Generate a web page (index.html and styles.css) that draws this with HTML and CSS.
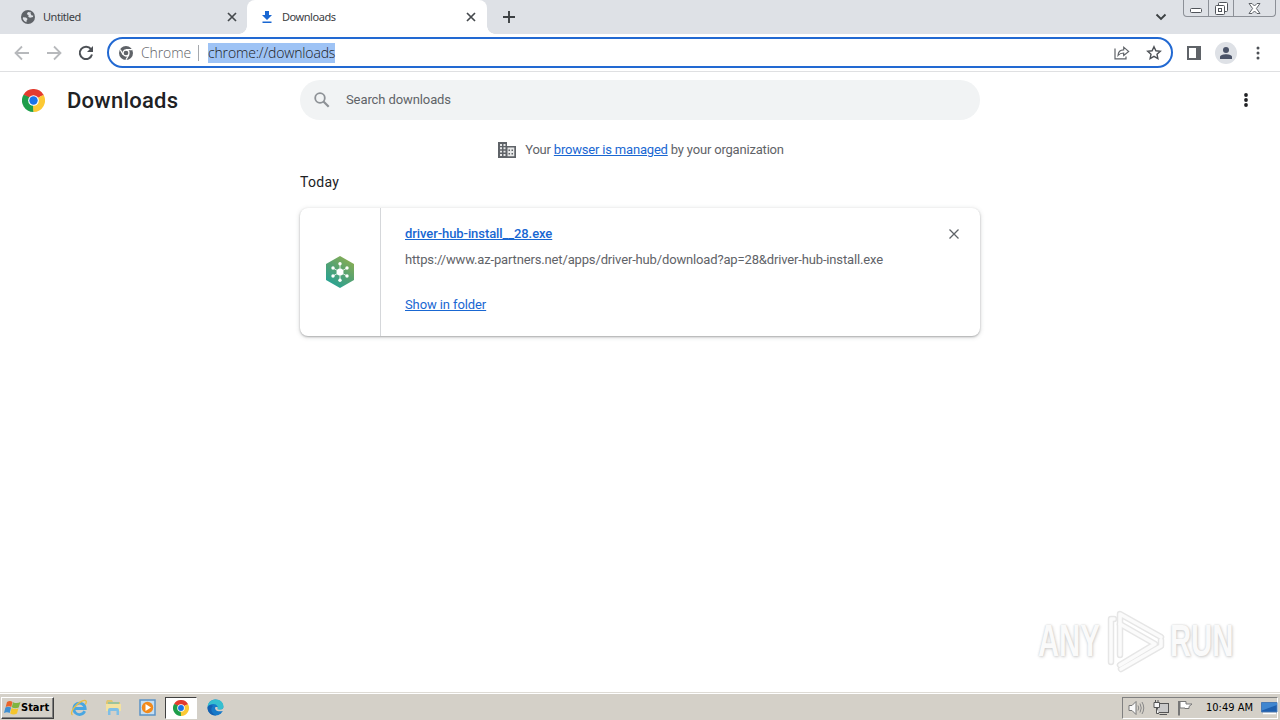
FILE: index.html
```html
<!DOCTYPE html>
<html lang="en">
<head>
    <meta charset="UTF-8">
    <meta name="viewport" content="width=device-width, initial-scale=1.0">
    <title>Downloads</title>
    <link rel="stylesheet" href="styles.css">
</head>
<body>
    <!-- Shared logo -->
    <svg class="defs" width="0" height="0">
        <symbol id="chrome" viewBox="0 0 24 24">
            <path d="M12 12 1.6 6A12 12 0 0 1 22.4 6Z" fill="#e33b2e"/>
            <path d="M12 12 22.4 6A12 12 0 0 1 12 24Z" fill="#fcc934"/>
            <path d="M12 12 12 24A12 12 0 0 1 1.6 6Z" fill="#1e9e4a"/>
            <path d="M12 6.5H22.7L22.4 6 12 5Z" fill="#e33b2e"/>
            <path d="M16.8 14.8 12 24 11.5 17Z" fill="#fcc934"/>
            <path d="M1.6 6 7.3 14.8 9 9Z" fill="#1e9e4a"/>
            <circle cx="12" cy="12" r="5.6" fill="#fff"/>
            <circle cx="12" cy="12" r="4.4" fill="#1a73e8"/>
        </symbol>
    </svg>

    <div class="tabstrip">
        <div class="tab">
            <svg class="tab-icon" width="14" height="14" viewBox="0 0 14 14"><circle cx="7" cy="7" r="7" fill="#5f6368"/><path d="M2 7.2 5 7.6 6.6 9 5.7 10.2 5.4 12.2 3.2 11 1.8 8.8ZM7 2 5.8 4 7.7 5.4 7.2 6.7 9 7.7 12 7.1 12.2 5.4 10.7 5.5 9.5 3.6 10.2 2.6Z" fill="#dee1e6"/></svg>
            <span class="tab-title">Untitled</span>
            <svg width="10" height="10" viewBox="0 0 10 10"><path d="M1 1 9 9M9 1 1 9" stroke="#45494d" stroke-width="1.7"/></svg>
        </div>
        <div class="tab active">
            <svg class="tab-icon" width="14" height="14" viewBox="0 0 14 14"><path d="M5 1H9V5H12L7 10 2 5H5ZM2.5 11.5H11.5V13H2.5Z" fill="#1967d2"/></svg>
            <span class="tab-title">Downloads</span>
            <svg width="10" height="10" viewBox="0 0 10 10"><path d="M1 1 9 9M9 1 1 9" stroke="#45494d" stroke-width="1.7"/></svg>
        </div>
        <svg class="new-tab" width="12" height="12" viewBox="0 0 12 12"><path d="M6 0V12M0 6H12" stroke="#3c4043" stroke-width="1.9"/></svg>
        <svg class="tab-search" width="12" height="8" viewBox="0 0 12 8"><path d="M1.5 1.5 6 6 10.5 1.5" fill="none" stroke="#3c4043" stroke-width="1.9"/></svg>
        <div class="window-buttons">
            <span class="wb min"><svg width="12" height="5" viewBox="0 0 12 5"><rect x=".5" y=".5" width="11" height="4" rx="1" fill="#fff" stroke="#50545a"/></svg></span>
            <span class="wb max"><svg width="13" height="13" viewBox="0 0 13 13" fill="#fff" stroke="#50545a"><rect x="3.5" y=".5" width="9" height="9" rx="1"/><rect x=".5" y="3.5" width="9" height="9" rx="1"/><rect x="3.5" y="6.5" width="3" height="3"/></svg></span>
            <span class="wb close"><svg width="13" height="11" viewBox="0 0 13 11"><path d="M1 .5H4L6.5 3 9 .5H12L8.4 5.5 12 10.5H9L6.5 8 4 10.5H1L4.6 5.5Z" fill="#fff" stroke="#5f6368"/></svg></span>
        </div>
    </div>

    <div class="toolbar">
        <div class="nav">
            <svg width="16" height="16" viewBox="0 0 16 16"><path d="M15 8H2M8 1.5 1.5 8 8 14.5" fill="none" stroke="#b7b9bc" stroke-width="1.8"/></svg>
            <svg width="16" height="16" viewBox="0 0 16 16"><path d="M1 8H14M8 1.5 14.5 8 8 14.5" fill="none" stroke="#b7b9bc" stroke-width="1.8"/></svg>
            <svg width="16" height="16" viewBox="0 0 16 16"><path d="M13 4.2A6.2 6.2 0 1 0 14 9.5" fill="none" stroke="#4d5156" stroke-width="2"/><path d="M15 1V7H9Z" fill="#4d5156"/></svg>
        </div>
        <div class="omnibox">
            <svg width="14" height="14" viewBox="0 0 14 14"><circle cx="7" cy="7" r="7" fill="#5f6368"/><circle cx="7" cy="7" r="3" fill="#5f6368" stroke="#fff" stroke-width="1.3"/><path d="M7 3.7H13.2M4.1 8.6 1.2 3.5M9.9 8.7 6.9 13.8" stroke="#fff" stroke-width="1.2"/></svg>
            <span class="scheme">Chrome</span>
            <span class="divider"></span>
            <span class="url">chrome://downloads</span>
            <svg class="share" width="16" height="14" viewBox="0 0 16 14"><path d="M1 2.5V12.8H12V10.500" fill="none" stroke="#5f6368" stroke-width="1.2"/><path d="M4 9.5C4.2 6 6.2 4 9.7 3.9V1.2L14.7 5.500 9.7 9.5V7C7.2 7 5.4 7.7 4 9.5Z" fill="none" stroke="#5f6368" stroke-width="1.1"/></svg>
            <svg width="16" height="16" viewBox="0 0 16 16"><path d="M8 1.7 9.9 5.8 14.3 6.3 11 9.3 11.9 13.7 8 11.4 4.1 13.7 5 9.3 1.7 6.3 6.1 5.8Z" fill="none" stroke="#4d5156" stroke-width="1.4"/></svg>
        </div>
        <div class="actions">
            <svg width="14" height="14" viewBox="0 0 14 14"><rect x="1" y="1" width="12" height="12" fill="none" stroke="#5f6368" stroke-width="2"/><path d="M9 1H14V13H9Z" fill="#5f6368"/></svg>
            <span class="avatar"><svg width="14" height="14" viewBox="0 0 14 14" fill="#4a5368"><circle cx="7" cy="4" r="3"/><path d="M1 13V11C1 9 4.5 8.2 7 8.2S13 9 13 11V13Z"/></svg></span>
            <svg width="4" height="14" viewBox="0 0 4 14" fill="#4d5156"><circle cx="2" cy="2" r="1.5"/><circle cx="2" cy="7" r="1.5"/><circle cx="2" cy="12" r="1.5"/></svg>
        </div>
    </div>

    <div class="page">
        <div class="header">
            <svg class="logo" width="23" height="23"><use href="#chrome"/></svg>
            <h1>Downloads</h1>
            <div class="search">
                <svg width="16" height="16" viewBox="0 0 16 16"><circle cx="6" cy="6" r="4.8" fill="none" stroke="#8d9196" stroke-width="1.8"/><path d="M9.5 9.5 14.7 14.7" stroke="#8d9196" stroke-width="2.2"/></svg>
                <span>Search downloads</span>
            </div>
            <svg class="more" width="4" height="14" viewBox="0 0 4 14" fill="#202124"><circle cx="2" cy="2" r="1.9"/><circle cx="2" cy="7" r="1.9"/><circle cx="2" cy="12" r="1.9"/></svg>
        </div>

        <div class="managed">
            <svg width="18" height="16" viewBox="0 0 18 16"><path d="M0 0H9V4H18V16H0Z" fill="#5f6368"/><path d="M2 2H4V4H2ZM5.5 2H7.5V4H5.5ZM2 5.3H4V7.2H2ZM5.5 5.3H7.5V7.2H5.5ZM2 8.7H4V10.6H2ZM5.5 8.7H7.5V10.6H5.5ZM2 12H4V14H2ZM5.5 12H7.5V14H5.5ZM9.5 5.6H16.3V14.3H9.5Z" fill="#fff" fill-opacity=".85"/><path d="M10.5 7.5H12V9H10.5ZM13.5 7.5H15V9H13.5ZM10.5 11H12V12.5H10.5ZM13.5 11H15V12.5H13.5Z" fill="#5f6368"/></svg>
            <span class="managed-text">Your <a href="#">browser is managed</a> by your organization</span>
        </div>

        <div class="content">
            <h2>Today</h2>
            <div class="card">
                <div class="file-icon">
                    <svg width="30" height="32" viewBox="0 0 30 32">
                        <defs><linearGradient id="hub" x1=".85" y1="0" x2=".2" y2="1"><stop offset="0" stop-color="#8faf4f"/><stop offset=".5" stop-color="#55a272"/><stop offset="1" stop-color="#22a398"/></linearGradient></defs>
                        <path d="M15 0 29 8V24L15 32 1 24V8Z" fill="url(#hub)"/>
                        <path d="M15 8V24M8 12 22 20M22 12 8 20" stroke="#fff" stroke-width=".8"/>
                        <g fill="#fff"><circle cx="15" cy="16" r="3.5"/><circle cx="15" cy="7.7" r="1.7"/><circle cx="15" cy="24.3" r="1.7"/><circle cx="8" cy="12" r="1.7"/><circle cx="22" cy="20" r="1.7"/><circle cx="22" cy="12" r="1.7"/><circle cx="8" cy="20" r="1.7"/></g>
                    </svg>
                </div>
                <div class="details">
                    <a class="file-name" href="#">driver-hub-install__28.exe</a>
                    <span class="source">https://www.az-partners.net/apps/driver-hub/download?ap=28&amp;driver-hub-install.exe</span>
                    <a class="show" href="#">Show in folder</a>
                </div>
                <svg class="remove" width="10" height="10" viewBox="0 0 10 10"><path d="M.5.5 9.5 9.5M9.5.5.5 9.5" stroke="#5f6368" stroke-width="1.3"/></svg>
            </div>
        </div>

        <div class="watermark">
            <span>ANY</span>
            <svg width="58" height="66" viewBox="0 0 58 66" fill="none" stroke-linejoin="round" stroke-linecap="round">
                <g stroke="#e6e6e6" stroke-width="6.5"><path d="M13 47V6L54 29"/><path d="M13 16 48 36 13 57"/><path d="M4 54V11H7M14 61 54 38V32"/></g>
                <g stroke="#fbfbfb" stroke-width="3.6"><path d="M13 47V6L54 29"/><path d="M13 16 48 36 13 57"/><path d="M4 54V11H7M14 61 54 38V32"/></g>
            </svg>
            <span>RUN</span>
        </div>
    </div>

    <div class="taskbar">
        <div class="start">
            <svg width="17" height="16" viewBox="0 0 17 16"><path d="M3 2Q6 0 8.5 2L7.3 7Q5 5.5 1.7 7Z" fill="#e9642b"/><path d="M9 2.2Q13 4 16.5 2L14.7 7.5Q11 9 7.8 7.2Z" fill="#7fb540"/><path d="M1.4 7.5Q4 6 7.1 7.5L5.7 13Q3 11.500 0 13Z" fill="#3f8fd2"/><path d="M7.6 8Q11 10 14.4 8.200L13 13.500Q9.500 15.500 6.200 13.500Z" fill="#f5c52c"/></svg>
            <span>Start</span>
        </div>
        <div class="launchers">
            <span class="app"><svg width="18" height="18" viewBox="0 0 18 18"><path d="M14.7 12.2A5.7 5.7 0 1 1 15.200 9.500H5" fill="none" stroke="#49a6e2" stroke-width="2.8"/><path d="M2.500 16C-1 14 6 4.500 12.500 1.800 17 .3 16.800 3.500 15.300 5.500" fill="none" stroke="#e9bd43" stroke-width="1.3"/></svg></span>
            <span class="app"><svg width="17" height="17" viewBox="0 0 17 17"><path d="M1 3 2 1H7L8 3H15V12H1Z" fill="#dfc572"/><path d="M3 3H14V6H3Z" fill="#9cc39c"/><path d="M1 5H16V12H1Z" fill="#f3e2a0"/><path d="M3 16V11Q3 9 5 9H12Q14 9 14 11V16H11.500V12H5.500V16Z" fill="#7fbfe6"/></svg></span>
            <span class="app"><svg width="17" height="17" viewBox="0 0 17 17"><rect x="1" y="1" width="15" height="15" fill="#c5def3" stroke="#5b93c6" stroke-width="1.5"/><circle cx="8.500" cy="8.500" r="5.700" fill="#f28a1c"/><path d="M6.500 5 12 8.500 6.500 12Z" fill="#fff"/></svg></span>
            <span class="app running"><svg width="16" height="16"><use href="#chrome"/></svg></span>
            <span class="app"><svg width="17" height="17" viewBox="0 0 17 17"><circle cx="8.5" cy="8.5" r="8" fill="#1679c9"/><path d="M.6 8C1 2.5 5 .5 8.5.5 14 .5 16.5 4 16.5 7.500 16.500 10.500 13 11.500 10.500 10.500 12 8 9.500 4.500 6 5 3.500 5.200 1.500 6.200.6 8Z" fill="#35bfd0"/><path d="M8.500 8C7 10 9.500 13.500 16 12L17 10.500V7.500C16.500 10.500 13 11.500 10.500 10.300Q11 9 10.500 8Z" fill="#d4d0c8"/><path d="M6 7C3 9 4 15 9.5 16.400 5 17 .5 13.500.5 9 1 6 4 5 6 7Z" fill="#1560b0"/></svg></span>
        </div>
        <div class="tray">
            <svg width="17" height="16" viewBox="0 0 17 16"><path d="M1 5.5H4L8 1.5V14.5L4 10.5H1Z" fill="#fafafa" stroke="#777"/><path d="M10 5.5Q11.500 8 10 10.500M12 3.500Q14.500 8 12 12.500M14 2Q17.500 8 14 14" fill="none" stroke="#888"/></svg>
            <svg width="16" height="16" viewBox="0 0 16 16"><rect x="4.5" y="3.5" width="11" height="9" fill="#c9c9c9" stroke="#555"/><path d="M6.500 14.500H14" stroke="#555"/><path d="M1 2.500H6.500V7.500H1ZM3.500 7.500V13.500H6" fill="#f5f5f5" stroke="#555"/><path d="M2.500 0V2.500M5 0V2.500" stroke="#555"/></svg>
            <svg width="16" height="16" viewBox="0 0 16 16"><path d="M2 1V15.5" stroke="#777" stroke-width="2"/><path d="M3 1.500H9V4H15L12 6.500V8.500H8V8H3Z" fill="#fff" stroke="#777"/></svg>
            <span class="clock">10:49 AM</span>
            <svg class="desktop" width="17" height="14" viewBox="0 0 17 14"><path d="M.5 1.500H16V11H.5Z" fill="#1e5fae" stroke="#4779b5"/><path d="M1 9.500 16 4V2H1Z" fill="#3f86d0"/><path d="M2 12.500H15" stroke="#fff" stroke-width="1.5"/></svg>
        </div>
    </div>
</body>
</html>
```
FILE: styles.css
```css
* {
    box-sizing: border-box;
}
body {
    margin: 0;
    width: 1280px;
    height: 720px;
    overflow: hidden;
    display: flex;
    flex-direction: column;
    background-color: #fff;
    font-family: Roboto, Arial, sans-serif;
    font-size: 13px;
    color: #5f6368;
}
svg {
    display: block;
    flex: none;
}
.defs {
    position: absolute;
}
a {
    color: #1967d2;
    text-decoration: underline;
}

/* Tab strip */
.tabstrip {
    height: 34px;
    display: flex;
    background-color: #dee1e6;
    font-family: "Noto Sans", sans-serif;
    font-size: 11px;
    color: #3c4043;
}
.tab {
    width: 247px;
    padding: 0 10px 0 21px;
    display: flex;
    align-items: center;
}
.tab-title {
    flex: 1;
    margin-left: 8px;
    padding-bottom: 1px;
    white-space: nowrap;
    letter-spacing: -0.45px;
}
.tab.active {
    width: 240px;
    padding: 0 11px 0 13px;
    background-color: #fff;
    border-radius: 8px 8px 0 0;
    position: relative;
}
.tab.active::before,
.tab.active::after {
    content: "";
    position: absolute;
    bottom: 0;
    width: 8px;
    height: 8px;
}
.tab.active::before {
    left: -8px;
    background: radial-gradient(circle at 0 0, #dee1e6 7.5px, #fff 8px);
}
.tab.active::after {
    right: -8px;
    background: radial-gradient(circle at 100% 0, #dee1e6 7.5px, #fff 8px);
}
.new-tab {
    margin: 11px auto 0 16px;
}
.tab-search {
    margin: 13px 16px 0 0;
}
.window-buttons {
    width: 93px;
    height: 17px;
    margin-right: 4px;
    display: flex;
    border: 1px solid #8c9097;
    border-top: none;
    border-radius: 0 0 4px 4px;
}
.wb {
    display: flex;
    justify-content: center;
    align-items: center;
    border-right: 1px solid #8c9097;
}
.min {
    width: 25px;
    padding-top: 5px;
}
.max {
    width: 25px;
}
.close {
    flex: 1;
    border-right: none;
}

/* Toolbar */
.toolbar {
    height: 38px;
    display: flex;
    align-items: center;
    border-bottom: 1px solid #dfe0e2;
}
.nav {
    width: 107px;
    padding-left: 14px;
    display: flex;
    gap: 16px;
}
.omnibox {
    width: 1066px;
    height: 31px;
    padding: 0 9px 0 10px;
    display: flex;
    align-items: center;
    border: 2px solid #2269d2;
    border-radius: 16px;
    font-family: "Open Sans", sans-serif;
    font-size: 14px;
    font-weight: 300;
}
.scheme {
    width: 50px;
    margin-left: 8px;
    letter-spacing: -0.1px;
}
.divider {
    width: 1px;
    height: 16px;
    margin: 0 9px 0 7px;
    background-color: #a5a8ad;
}
.url {
    height: 20px;
    line-height: 20px;
    background-color: #9ec3f5;
    color: #202124;
    letter-spacing: -0.16px;
}
.share {
    margin-left: auto;
    margin-right: 16px;
}
.actions {
    margin-left: 14px;
    display: flex;
    align-items: center;
}
.avatar {
    width: 22px;
    height: 22px;
    margin: 0 19px 0 14px;
    display: flex;
    justify-content: center;
    align-items: center;
    border-radius: 50%;
    background-color: #dee1e6;
}

/* Downloads page */
.page {
    height: 620px;
    position: relative;
}
.header {
    height: 56px;
    padding: 0 32px 0 22px;
    display: flex;
    align-items: center;
}
h1 {
    width: 233px;
    margin: 0 0 0 22px;
    font-size: 22px;
    font-weight: 500;
    letter-spacing: 0.25px;
    color: #202124;
}
.search {
    width: 680px;
    height: 40px;
    padding-left: 14px;
    display: flex;
    align-items: center;
    gap: 16px;
    border-radius: 20px;
    background-color: #f1f3f4;
    letter-spacing: -0.1px;
}
.search span {
    padding-bottom: 2px;
}
.more {
    margin-left: auto;
}
.managed {
    height: 44px;
    padding-left: 2px;
    display: flex;
    justify-content: center;
    align-items: center;
    gap: 9px;
}
.managed-text {
    padding-bottom: 2px;
    letter-spacing: -0.19px;
}
.content {
    width: 680px;
    margin: 0 auto;
}
h2 {
    height: 36px;
    margin: 0;
    line-height: 21px;
    font-size: 14px;
    font-weight: 400;
    letter-spacing: 0.3px;
    color: #202124;
}
.card {
    height: 128px;
    display: flex;
    background-color: #fff;
    border-radius: 8px;
    box-shadow: 0 1px 2px rgba(60, 64, 67, 0.35), 0 1px 5px rgba(60, 64, 67, 0.2);
}
.file-icon {
    width: 81px;
    display: flex;
    justify-content: center;
    align-items: center;
    border-right: 1px solid #d5d7da;
}
.details {
    flex: 1;
    padding: 16px 0 0 24px;
    display: flex;
    flex-direction: column;
    align-items: flex-start;
    line-height: 20px;
}
.file-name {
    font-weight: 500;
    letter-spacing: -0.08px;
}
.source {
    margin-top: 6px;
    letter-spacing: -0.15px;
}
.show {
    margin-top: 25px;
    letter-spacing: -0.1px;
}
.remove {
    margin: 21px 21px 0 0;
}
.watermark {
    position: absolute;
    right: 46px;
    bottom: 18px;
    display: flex;
    align-items: center;
    gap: 5px;
    font-family: "Liberation Sans", sans-serif;
    font-size: 45px;
    font-weight: bold;
    color: #fafafa;
    text-shadow: 0 0 2px #ccc, 1px 1px 4px #ccc;
}
.watermark span {
    width: 64px;
    transform-origin: left;
    transform: scaleX(0.65);
}

/* Taskbar */
.taskbar {
    height: 28px;
    padding: 2px 2px 0 1px;
    display: flex;
    align-items: center;
    background-color: #d4d0c8;
    border-top: 1px solid #dedbd5;
    box-shadow: inset 0 1px #fff;
    font-family: "DejaVu Sans Condensed", "DejaVu Sans", sans-serif;
    font-size: 11px;
    color: #000;
}
.start {
    width: 53px;
    height: 22px;
    padding-left: 2px;
    display: flex;
    align-items: center;
    border: 1px solid;
    border-color: #fff #404040 #404040 #fff;
    box-shadow: inset -1px -1px #808080;
    font-weight: bold;
}
.launchers {
    margin-left: 9px;
    display: flex;
    gap: 2px;
}
.app {
    width: 32px;
    height: 22px;
    display: flex;
    justify-content: center;
    align-items: center;
}
.running {
    background-color: #fff;
    border: 1px solid;
    border-color: #404040 #fff #fff #404040;
}
.tray {
    width: 156px;
    height: 22px;
    margin-left: auto;
    padding-left: 5px;
    display: flex;
    align-items: center;
    gap: 8px;
    border: 1px solid;
    border-color: #808080 #fff #fff #808080;
}
.clock {
    margin-left: 5px;
    white-space: nowrap;
}
```
